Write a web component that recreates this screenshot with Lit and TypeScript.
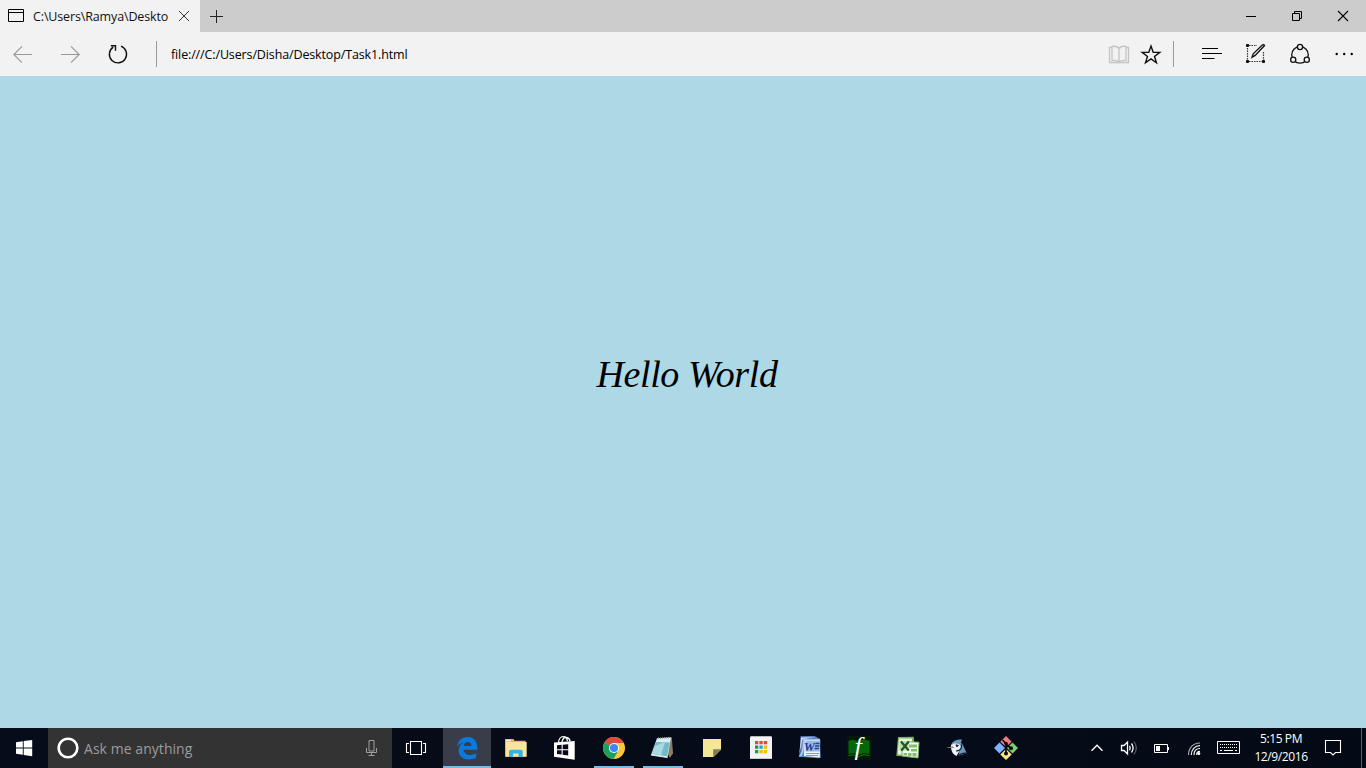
import { LitElement, html, svg, css } from "lit";
import { customElement } from "lit/decorators.js";

/* Each cell's viewBox uses desktop coordinates: x, y, width, height. */
const cell = (x: number, y: number, w: number, h: number, art: unknown) =>
  html`<svg class="cell" width=${w} height=${h} viewBox="${x} ${y} ${w} ${h}" fill="none">${art}</svg>`;

const pageIcon = svg`<path d="M8.5 9.5h15v12h-15zM8.5 12.5h15" stroke="#000"/>`;
const closeTab = svg`<path d="M179 11l10 10M189 11l-10 10" stroke="#333"/>`;
const plus = svg`<path d="M210 16.5h13M216.5 10v13" stroke="#222"/>`;
const minimise = svg`<path d="M1246 16.5h10" stroke="#000"/>`;
const restore = svg`<path d="M1292.5 13.5h7v7h-7zM1294.5 13.5v-2h7v7h-2" stroke="#000"/>`;
const closeWin = svg`<path d="M1338 11l10 10M1348 11l-10 10" stroke="#000" stroke-width="1.1"/>`;

const back = svg`<path d="M32 54.5H13.8M22 46.3l-8.2 8.2 8.2 8.2" stroke="#999" stroke-width="1.1"/>`;
const forward = svg`<path d="M61 54.5h18.2M71 46.3l8.2 8.2-8.2 8.2" stroke="#999" stroke-width="1.1"/>`;
const refresh = svg`<path d="M121 46.2A8.6 8.6 0 1 1 113.2 47.1M110.8 45.8h4.7v5" stroke="#111" stroke-width="1.4"/>`;
const book = svg`<g stroke="#c4c4c4" stroke-width="1.3"><path d="M1112 47.5h-2.5v15h19v-15h-2.5"/><path d="M1119 48.5c-1.5-2-4.500-2.500-7-2v14.200c2.500-.5 5.500 0 7 1.800 1.500-1.800 4.500-2.300 7-1.800V46.500c-2.500-.5-5.500 0-7 2zv14"/></g>`;
const star = svg`<path d="M1151 46l2.200 6.300 6.600.1-5.300 4 2 6.400-5.500-3.900-5.500 3.900 2-6.400-5.300-4 6.600-.1z" stroke="#111" stroke-width="1.4"/>`;
const hub = svg`<path d="M1202 48.500h16M1202 53.500h20M1202 58.500h12.500" stroke="#000" stroke-width="1.100"/>`;
const note = svg`<path d="M1249 45.500h8M1247.500 48v12M1249 61.500h13M1263.500 52v8" stroke="#333" stroke-width="1.200" stroke-dasharray="1.500 1"/>
<path d="M1246.500 44.500h2v2h-2zM1246.500 60.500h2v2h-2zM1262.500 60.500h2v2h-2z" fill="#111" stroke="#111"/>
<path d="M1252 57.300l1.200-3.400 9.300-9.100q1.400-.6 2 .7l-9.300 9.900z" stroke="#111" stroke-width="1.300"/>`;
const share = svg`<circle cx="1300" cy="54.800" r="8.300" stroke="#111" stroke-width="1.300"/><g fill="#f2f2f2" stroke="#111" stroke-width="1.300"><circle cx="1300" cy="47" r="2.600"/><circle cx="1293.200" cy="59.800" r="2.600"/><circle cx="1306.800" cy="59.800" r="2.600"/></g>`;
const more = svg`<g fill="#000"><circle cx="1336.700" cy="54" r="1.200"/><circle cx="1344.200" cy="54" r="1.200"/><circle cx="1351.700" cy="54" r="1.200"/></g>`;

const start = svg`<path d="M16 742.300l6.800-1v6.200H16zM23.700 741.100l8.500-1.200v7.600h-8.500zM16 748.500h6.800v6.300l-6.800-1zM23.700 748.500h8.500v7.700l-8.500-1.200z" fill="#fff"/>`;
const ring = svg`<circle cx="68" cy="748" r="9.300" stroke="#fff" stroke-width="2.600"/>`;
const mic = svg`<path d="M369 740.500h5v10.500h-5zM366.500 748v4.500h10V748M371.500 752.500v3M368.500 755.500h6" stroke="#a0a0a0"/>`;
const taskView = svg`<path d="M410.500 741.500h11v13h-11zM409 743.500h-2.500v9h2.500M423 743.500h2.500v9h-2.500" stroke="#fff" stroke-width="1.100"/>`;
const edge = svg`<path d="M457 746.800C457.900 740.600 462 737 467.500 737c6.300 0 9.800 4.500 9.800 10.200v2.600h-13.700c.2 3.600 3.100 5.200 6.500 5.200 2.300 0 4.400-.6 6.100-1.700v4.500c-2.200 1.100-4.800 1.600-7.400 1.600-6.200 0-10.100-3.600-10.100-9 0-3.700 2-6.500 5.100-7.900-3.200.4-5.400 2-6.800 4.300zm6.700-.9h7.600c0-2.600-1.300-4-3.600-4s-3.700 1.500-4 4z" fill="#0a7ae0"/>`;
const folder = svg`<path d="M505 739h8.500l1 1.800h11v16H505z" fill="#e6b64c"/><path d="M506 742h20.700v14.700H506z" fill="#fde69b"/><path d="M506 739.800h5v1.500h-5z" fill="#fff2c9"/><path d="M509 757v-5.500q0-1.700 1.800-1.700h10q1.900 0 1.900 1.700v5.500h-4.200v-3.500h-5.400v3.500z" fill="#36b2e5"/>`;
const store = svg`<path d="M554 742.500l20.700-1.500v18.700l-20.700-3z" fill="#fff"/><path d="M558.500 743c0-4 2.300-6.300 4.700-6.300s3.800 1.800 4.300 4.500M562 742c.5-3.500 2.500-5 4.500-4.600s3.300 1.700 3.600 4" stroke="#fff" stroke-width="1.300"/><path d="M557 745.200l4.600-.4v4.400H557zM562.700 744.700l5.500-.5v5H562.700zM557 750.200h4.600v4.400l-4.600-.5zM562.700 750.200h5.500v5.200l-5.500-.6z" fill="#050b18"/>`;
const chrome = svg`<circle cx="614" cy="748" r="11" fill="#fcc934"/><path d="M614 748L604.500 742.500A11 11 0 0 1 623.700 743H614z" fill="#dd4b3e"/><path d="M614 748l-9.500-5.500A11 11 0 0 0 613.500 759l4.800-8.300z" fill="#1da05f"/><circle cx="614" cy="748" r="5.100" fill="#fff"/><circle cx="614" cy="748" r="4.100" fill="#4285f4"/>`;
const notepad = svg`<path d="M657.500 738.500l14.300-1.300 1.200 16-3 4.600z" fill="#8b7c66"/><path d="M657 738.200l14-.7-3.500 20-16.500-2.500z" fill="#d5eff4"/><path d="M656 742l13.800.5-2.700 13.700-14.800-2.200z" fill="#77b8c7"/><path d="M655 746l10-4-4 13.200-8.400-1.700z" fill="#a6dbe3"/><path d="M658 738.200l12-.6" stroke="#999" stroke-width="1.600" stroke-dasharray="1 1"/><path d="M651 755l16.500 2.500" stroke="#e3edf0" stroke-width="1.200"/>`;
const sticky = svg`<path d="M703 739h18v10.500l-7.500 7.500H703z" fill="#f4e795"/><path d="M713.200 757v-7.700H721z" fill="#817d5b"/><path d="M713.200 757l7.800-7.500v.8l-7 6.700z" fill="#4e4c3a"/>`;
const dots = [["#f44336", "#f44336", "#f44336"], ["#0f9d58", "#1e9bff", "#fbbc05"], ["#0f9d58", "#fbbc05", "#fbbc05"]];
const launcher = svg`<rect x="750" y="736.300" width="22" height="22.500" rx="1.200" fill="#f2f3f4"/><path d="M750 758.500h22" stroke="#c9cacb"/>${dots.map((r, j) => r.map((c, i) => svg`<rect x=${755 + i * 4.4} y=${741 + j * 4.5} width="3.300" height="3.300" fill=${c}/>`))}`;
const word = svg`<path d="M800.500 736.300l14-.3 5.500 3 .7 19-2.500.2-19.500-1.500 1.600-5z" fill="#5f86cc"/><path d="M801 737.500l13-.2-11.500 2-3.500 16.500z" fill="#c9daf5"/><path d="M804.500 739.500h15.700l-.5 18-15.700-1.600z" fill="#f1f5fc"/><path d="M799.500 756c4-1 3.200-9 5-18" stroke="#b2caf0" stroke-width="1.600"/><path d="M805.500 740.500H820v11h-14.500z" fill="#9fb8e3"/><text x="803.800" y="751" font-family="Liberation Serif" font-style="italic" font-weight="700" font-size="12.500" fill="#183f94">W</text><path d="M815.500 743.500h4M815 746h4.500M814.500 748.500h4.500" stroke="#1d4699" stroke-width="1.300"/><path d="M806 753.500h13M806 755.500h12" stroke="#7d9bd2"/>`;
const fIcon = svg`<path d="M847 736h24v24h-24z" fill="#021a05"/><path d="M848.500 741c3-1.500 7-1.200 10 1 3-2.200 8-2.500 11-1v13c-4-1-8-1-11 1-3-2-6-2-10-1z" fill="#056708"/><path d="M848.500 755.500c4-1 7-1 10 1.500 3-2.500 7-2.500 11-1.500" stroke="#0a8c0e"/><text x="854.500" y="754.500" font-family="Liberation Serif" font-style="italic" font-size="26" fill="#fff">f</text>`;
const excel = svg`<path d="M898 737l15.800-.3 1 20-18.500-.8z" fill="#78b05d"/><path d="M899 738.500h13v16h-14.300z" fill="#e7f3dc"/><path d="M902 741.500l17 .7-1 15.800-16-2z" fill="#f3faee" stroke="#7fac6a"/><path d="M909 744.500h8v3h-8zM911 749h6v2.500h-6zM903.500 753h3.500v2.500h-3.500zM908 753h3.500v3H908zM912.500 753h4v3.500h-4z" fill="#83bd70"/><path d="M899.500 741h9v9.500h-9z" fill="#bcdca9"/><path d="M901 741.500l7.800 9M908.800 741.500l-7.500 9" stroke="#21551e" stroke-width="2.200"/>`;
const bird = svg`<path d="M951 744.500c2-3.500 6-5.300 11-4.800l-1.200 2.800c2.500 2.500 3.700 6 6 10.800l-8.300 2.400c1.200-4 .8-7 .5-9z" fill="#6c97be"/><path d="M951 745c3-2.500 8-2 10 .8-.5 4-2.300 6.700-4.500 10.200-3.500-1.500-5.800-5-5.500-11z" fill="#edf4f8"/><path d="M946 747.700l6.800-1.500 1.500 1.800z" fill="#8b8b89"/><path d="M956 744.800l2.500.7-1.800 1.200z" fill="#18222f" stroke="#18222f"/><path d="M961.300 744.500c1 4-1 6-5 6.500M958 755.500c3-2 5-2.500 8.500-2.500" stroke="#18222f" stroke-width="1.300"/>`;
const git = svg`<path d="M1006 736l5.700 5.700-5.700 5.300-5.700-5.300z" fill="#f47b82"/><path d="M999.500 742.500l5.500 5.500-5.500 5.500L994 748z" fill="#80b3ff"/><path d="M1012.500 742.500l5.500 5.500-5.500 5.500L1007 748z" fill="#7ed070"/><path d="M1006 749l5.700 5.500-5.700 5.500-5.700-5.500z" fill="#ffe680"/><path d="M1002.500 740l3.500 3.500v10M1006 744l5 4.500" stroke="#080c12" stroke-width="1.700"/><g fill="#080c12"><circle cx="1006" cy="743.500" r="1.800"/><circle cx="1011" cy="748.300" r="2"/><circle cx="1006" cy="753.500" r="2"/></g>`;

const chevron = svg`<path d="M1091.500 750.800l5.500-5.500 5.500 5.500" stroke="#fff" stroke-width="1.400"/>`;
const speaker = svg`<path d="M1121.500 745.500h2.500l3.500-3.500v12l-3.500-3.500h-2.500zM1129.500 745.800q1.500 2.200 0 4.500M1131.500 743.500q3.200 4.500 0 9" stroke="#fff" stroke-width="1.300"/><path d="M1134 741.500q4.600 6.500 0 13" stroke="#6d717a"/>`;
const battery = svg`<path d="M1154.500 744.500h13v8h-13z" stroke="#fff"/><path d="M1156 746h4v5h-4zM1168 747h1v3h-1z" fill="#fff"/>`;
const wifi = svg`<g stroke="#f4f4f4" stroke-width="1.200"><path d="M1188.500 755c0-7 4.500-12 11.500-12" stroke="#a6aab0"/><path d="M1191.300 755c0-5.500 3.500-9.300 8.700-9.300M1194 755c0-4 2.300-6.500 6-6.500M1196.700 755c0-2.200 1.300-3.600 3.300-3.600"/></g><circle cx="1198.800" cy="753.600" r="1.500" fill="#fff"/>`;
const keyboard = svg`<path d="M1217.500 741.500h22v12h-22z" stroke="#fff"/><path d="M1220 744.500h18M1220 747.500h18" stroke="#fff" stroke-dasharray="1 1"/><path d="M1220 750.500h2M1224 750.500h9M1235 750.500h2" stroke="#fff"/>`;
const action = svg`<path d="M1325.500 740.500h15v12h-5l-2.500 2.500-2.500-2.500h-5z" stroke="#fff" stroke-width="1.100"/>`;

@customElement("app-root")
export class AppRoot extends LitElement {
  static styles = css`
    :host { display: flex; flex-direction: column; width: 1366px; height: 768px; overflow: hidden; background: #add8e6; font-family: "Open Sans", "Noto Sans", sans-serif; white-space: nowrap; }
    .cell { display: block; flex: none; }
    .row { display: flex; flex: none; }
    .grow { flex: 1; }
    .tabs { height: 32px; background: #ccc; }
    .tab { display: flex; width: 200px; background: #f2f2f2; }
    .title { width: 139px; font-size: 12.5px; line-height: 33px; letter-spacing: -0.14px; color: #111; }
    .nav { height: 44px; background: #f2f2f2; align-items: stretch; }
    .rule { width: 1px; height: 26px; margin-top: 9px; background: #999; flex: none; }
    .url { flex: 1; padding-left: 14px; font-size: 12.5px; line-height: 46px; letter-spacing: -0.13px; color: #000; }
    main { flex: 1; display: flex; justify-content: center; align-items: center; }
    .hello { font: italic 38px/44px "Monotype Corsiva", "Liberation Serif", serif; margin: 0 0 57px 8px; letter-spacing: -0.4px; color: #000; }
    .bar { height: 40px; background: linear-gradient(90deg, #050d1a, #070b18 35%, #050b18 60%, #040a15); }
    .search { display: flex; width: 344px; background: #333; }
    .ask { flex: 1; font-size: 14px; line-height: 42px; letter-spacing: 0.05px; color: #9c9c9c; }
    .app { width: 49px; display: flex; flex: none; }
    .app.active { background: linear-gradient(#76b9ed, #76b9ed) 0 38px / 48px 2px no-repeat, linear-gradient(#393d49, #393d49) 0 0 / 48px 40px no-repeat; }
    .app.on { background: linear-gradient(#76b9ed, #76b9ed) 4px 38px / 40px 2px no-repeat; }
    .clock { width: 70px; text-align: center; color: #fff; font-size: 12px; line-height: 18px; padding-top: 2px; letter-spacing: -0.4px; }
    .peek { width: 4px; border-left: 1px solid #5a606a; }
  `;

  render() {
    const apps: [unknown, string][] = [
      [edge, "active"], [folder, ""], [store, ""], [chrome, "on"], [notepad, "on"], [sticky, ""],
      [launcher, ""], [word, ""], [fIcon, ""], [excel, ""], [bird, ""], [git, ""],
    ];
    return html`
      <div class="row tabs">
        <div class="tab">${cell(0, 0, 33, 32, pageIcon)}<span class="title">C:\\Users\\Ramya\\Deskto</span>${cell(172, 0, 28, 32, closeTab)}</div>
        ${cell(200, 0, 34, 32, plus)}
        <div class="grow"></div>
        ${cell(1228, 0, 46, 32, minimise)}${cell(1274, 0, 46, 32, restore)}${cell(1320, 0, 46, 32, closeWin)}
      </div>
      <div class="row nav">
        ${cell(0, 32, 48, 44, back)}${cell(48, 32, 48, 44, forward)}${cell(96, 32, 60, 44, refresh)}
        <div class="rule"></div>
        <div class="url"><span>file:///C:/Users/Disha/Desktop/Task1.html</span></div>
        ${cell(1103, 32, 32, 44, book)}${cell(1135, 32, 38, 44, star)}
        <div class="rule"></div>
        ${cell(1174, 32, 60, 44, hub)}${cell(1234, 32, 44, 44, note)}${cell(1278, 32, 44, 44, share)}${cell(1322, 32, 44, 44, more)}
      </div>
      <main><div class="hello">Hello World</div></main>
      <div class="row bar">
        ${cell(0, 728, 48, 40, start)}
        <div class="search">${cell(48, 728, 36, 40, ring)}<span class="ask">Ask me anything</span>${cell(352, 728, 40, 40, mic)}</div>
        ${cell(392, 728, 51, 40, taskView)}
        ${apps.map(([art, state], i) => html`<div class="app ${state}">${cell(443 + i * 49, 728, 49, 40, art)}</div>`)}
        <div class="grow"></div>
        ${cell(1081, 728, 32, 40, chevron)}${cell(1113, 728, 32, 40, speaker)}${cell(1145, 728, 34, 40, battery)}${cell(1179, 728, 32, 40, wifi)}${cell(1211, 728, 35, 40, keyboard)}
        <div class="clock">5:15 PM<br />12/9/2016</div>
        ${cell(1316, 728, 45, 40, action)}
        <div class="peek"></div>
      </div>
    `;
  }
}
